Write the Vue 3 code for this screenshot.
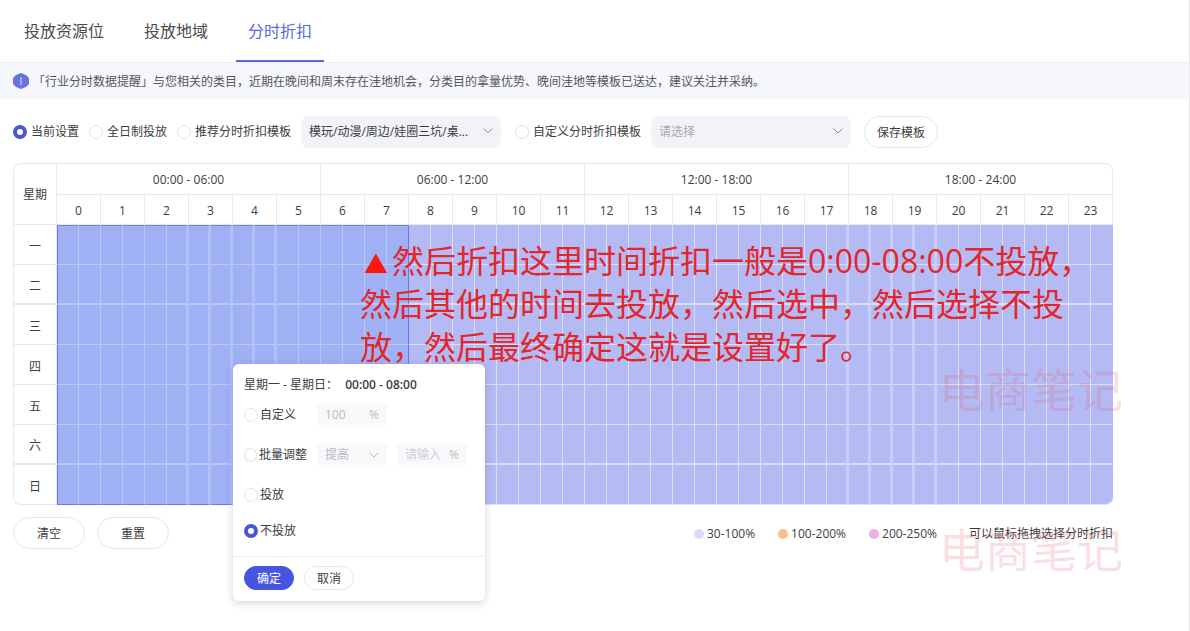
<template>
    <div class="page">
        <nav class="tabs">
            <a
                v-for="tab in tabs"
                :key="tab"
                href="#"
                class="tab"
                :class="{ active: tab === activeTab }"
                @click.prevent="activeTab = tab"
                v-text="tab"
            ></a>
        </nav>
        <div class="notice">
            <svg class="notice-icon" viewBox="0 0 16 16">
                <path d="M8 0l5 2 3 3v6l-3 3-5 2-5-2-3-3V5l3-3z" fill="#6672e4" />
                <path d="M8 4v8" stroke="#b9c0f8" stroke-width="1.5" />
            </svg>
            <p>「行业分时数据提醒」与您相关的类目，近期在晚间和周末存在洼地机会，分类目的拿量优势、晚间洼地等模板已送达，建议关注并采纳。</p>
        </div>
        <main class="content">
            <div class="filters">
                <label class="radio"><input type="radio" value="current" v-model="mode" />当前设置</label>
                <label class="radio"><input type="radio" value="allday" v-model="mode" />全日制投放</label>
                <label class="radio"><input type="radio" value="recommend" v-model="mode" />推荐分时折扣模板</label>
                <div class="select-box">
                    <select aria-label="推荐分时折扣模板">
                        <option>模玩/动漫/周边/娃圈三坑/桌...</option>
                    </select>
                    <svg viewBox="0 0 10 6"><path d="M0.5 0.5L5 5l4.5-4.5" /></svg>
                </div>
                <label class="radio custom"><input type="radio" value="custom" v-model="mode" />自定义分时折扣模板</label>
                <div class="select-box">
                    <select class="placeholder" aria-label="自定义分时折扣模板">
                        <option>请选择</option>
                    </select>
                    <svg viewBox="0 0 10 6"><path d="M0.5 0.5L5 5l4.5-4.5" /></svg>
                </div>
                <button type="button" class="btn save">保存模板</button>
            </div>

            <div class="board">
                <table class="schedule">
                    <colgroup>
                        <col class="week-col" />
                        <col v-for="n in 48" :key="n" />
                    </colgroup>
                    <thead>
                        <tr class="period-row">
                            <th rowspan="2" class="corner">星期</th>
                            <th v-for="p in periods" :key="p" colspan="12" v-text="p"></th>
                        </tr>
                        <tr class="hour-row">
                            <th v-for="h in 24" :key="h" colspan="2">{{ h - 1 }}</th>
                        </tr>
                    </thead>
                    <tbody>
                        <tr v-for="(day, row) in days" :key="day" :class="{ strong: row === 1 || row === 5 }">
                            <th v-text="day"></th>
                            <td v-for="n in 48" :key="n" :class="cellClass(row, n)"></td>
                        </tr>
                    </tbody>
                </table>

                <p class="note">
                    <span class="mark">▲</span>然后折扣这里时间折扣一般是0:00-08:00不投放，<br />
                    然后其他的时间去投放，然后选中，然后选择不投<br />
                    放，然后最终确定这就是设置好了。
                </p>

                <form class="popover" @submit.prevent>
                    <div class="popover-body">
                        <div class="popover-title">星期一 - 星期日： <b>00:00 - 08:00</b></div>
                        <div class="option">
                            <label class="radio"><input type="radio" value="fixed" v-model="action" />自定义</label>
                            <div class="field">
                                <input type="text" value="100" aria-label="自定义折扣" disabled />
                                <span>%</span>
                            </div>
                        </div>
                        <div class="option">
                            <label class="radio"><input type="radio" value="batch" v-model="action" />批量调整</label>
                            <div class="field">
                                <select aria-label="调整方式" disabled>
                                    <option>提高</option>
                                </select>
                                <svg viewBox="0 0 10 6"><path d="M0.5 0.5L5 5l4.5-4.5" /></svg>
                            </div>
                            <div class="field">
                                <input type="text" placeholder="请输入" aria-label="调整比例" disabled />
                                <span>%</span>
                            </div>
                        </div>
                        <div class="option">
                            <label class="radio"><input type="radio" value="on" v-model="action" />投放</label>
                        </div>
                        <div class="option last">
                            <label class="radio"><input type="radio" value="off" v-model="action" />不投放</label>
                        </div>
                    </div>
                    <div class="popover-footer">
                        <button type="submit" class="btn small primary">确定</button>
                        <button type="button" class="btn small">取消</button>
                    </div>
                </form>
                <div class="watermark">电商笔记</div>
            </div>

            <div class="bottom">
                <button type="button" class="btn">清空</button>
                <button type="button" class="btn">重置</button>
                <ul class="legend">
                    <li v-for="item in legend" :key="item.text">
                        <i :class="item.color"></i>{{ item.text }}
                    </li>
                </ul>
                <span class="tip">可以鼠标拖拽选择分时折扣</span>
                <div class="watermark">电商笔记</div>
            </div>
        </main>
    </div>
</template>
<script setup>
import { ref } from "vue";

const tabs = ["投放资源位", "投放地域", "分时折扣"];
const activeTab = ref("分时折扣");
const mode = ref("current");
const action = ref("off");

const periods = ["00:00 - 06:00", "06:00 - 12:00", "12:00 - 18:00", "18:00 - 24:00"];
const days = ["一", "二", "三", "四", "五", "六", "日"];
const legend = [
    { text: "30-100%", color: "purple" },
    { text: "100-200%", color: "orange" },
    { text: "200-250%", color: "pink" },
];

/* 每格半小时，选中 00:00 - 08:00 */
const selectedEnd = 16;
function cellClass(row, n) {
    const selected = n <= selectedEnd;
    return {
        selected,
        wide: (n >= 6 && n <= 10) || (n >= 36 && n <= 40),
        "edge-top": selected && row === 0,
        "edge-bottom": selected && row === days.length - 1,
        "edge-left": n === 1,
        "edge-right": n === selectedEnd,
    };
}
</script>
<style>
body {
    margin: 0;
    background: #fff;
}
</style>
<style scoped>
.page {
    min-height: 100vh;
    box-sizing: border-box;
    border-right: 1px solid #e8e9ee;
    font-family: "Open Sans", "Noto Sans CJK SC", sans-serif;
    font-size: 12px;
    line-height: 20px;
    color: #3c3d42;
    overflow: hidden;
}
.page p {
    margin: 0;
}
.page input,
.page select,
.page button {
    font: inherit;
    color: inherit;
    margin: 0;
}
.tabs {
    display: flex;
    gap: 16px;
    padding: 0 12px;
    border-bottom: 1px solid #eceef5;
}
.tab {
    padding: 20px 12px 18px;
    border-bottom: 2px solid transparent;
    font-size: 16px;
    line-height: 22px;
    color: #4a4b50;
    text-decoration: none;
}
.tab.active {
    color: #5c68dc;
    border-color: #5c68dc;
}
.notice {
    display: flex;
    align-items: center;
    gap: 4px;
    padding: 7px 13px;
    background: #f6f7fd;
    color: #55565c;
}
.notice p {
    padding-top: 2px;
}
.notice-icon {
    width: 16px;
    height: 16px;
    flex: none;
}
.content {
    padding: 17px 76px 0 13px;
}
.filters {
    display: flex;
    align-items: center;
    gap: 10px;
    margin-bottom: 15px;
}
.radio {
    display: flex;
    align-items: center;
    gap: 4px;
    white-space: nowrap;
}
.radio.custom {
    margin-left: 4px;
}
.radio input {
    appearance: none;
    box-sizing: border-box;
    width: 14px;
    height: 14px;
    border: 1px solid #e2e4ea;
    border-radius: 50%;
    background: #fff;
}
.radio input:checked {
    border: 4px solid #4a56d8;
}
.select-box {
    position: relative;
    width: 200px;
}
.page .select-box select {
    appearance: none;
    width: 100%;
    height: 32px;
    padding: 0 24px 0 8px;
    border: none;
    border-radius: 8px;
    background: #f1f3f6;
}
.page .select-box select.placeholder {
    color: #a6a8ae;
}
.select-box svg,
.field svg {
    position: absolute;
    right: 8px;
    top: 12px;
    width: 10px;
    height: 6px;
    fill: none;
    stroke: #8b8d94;
    pointer-events: none;
}
.btn {
    box-sizing: border-box;
    width: 72px;
    height: 32px;
    padding: 2px 0 0;
    border: 1px solid #e6e8ec;
    border-radius: 16px;
    background: #fff;
}
.btn.save {
    width: 74px;
    margin-left: 3px;
}
.board {
    position: relative;
}
.schedule {
    width: 100%;
    table-layout: fixed;
    border-collapse: separate;
    border-spacing: 0;
}
.week-col {
    width: 44px;
}
.schedule th,
.schedule td {
    box-sizing: border-box;
    padding: 0;
    border: 0 solid #e6e9ef;
    border-width: 0 1px 1px 0;
    font-weight: normal;
    text-align: center;
}
.schedule th {
    padding-top: 2px;
}
.schedule .period-row th {
    height: 32px;
    border-top-width: 1px;
}
.schedule .hour-row th {
    height: 30px;
}
.schedule .corner {
    border-left-width: 1px;
    border-radius: 8px 0 0 0;
}
.schedule .period-row th:last-child {
    border-radius: 0 8px 0 0;
}
.schedule tbody th {
    height: 40px;
    padding-top: 4px;
    border-left-width: 1px;
}
.schedule tbody tr:last-child th {
    border-radius: 0 0 0 8px;
}
.schedule td {
    background: #b4baf3;
    border-color: #dadefb;
}
.schedule td:last-child {
    border-right-color: #b4baf3;
}
.schedule tr:last-child td:last-child {
    border-radius: 0 0 8px 0;
}
.schedule td.selected {
    background: #9fb0f4;
    border-color: #b9c8fa;
}
.schedule td.wide {
    border-right: 3px solid #c8cdf9;
}
.schedule td.selected.wide {
    border-right-color: #afbff8;
}
.schedule .strong th,
.schedule .strong td {
    border-bottom-width: 2px;
}
.schedule td.edge-top {
    border-top: 1px solid #7380e0;
}
.schedule td.edge-bottom {
    border-bottom-color: #6b7ae2;
}
.schedule td.edge-left {
    border-left: 1px solid #6b7ae2;
}
.schedule td.edge-right {
    border-right-color: #6b7ae2;
}
.note {
    position: absolute;
    left: 347px;
    top: 76px;
    font-size: 32px;
    line-height: 43px;
    color: #e3262b;
    white-space: nowrap;
}
.note .mark {
    display: inline-block;
    width: 32px;
    font-size: 24px;
    line-height: 24px;
    text-align: center;
    color: #fb1a12;
}
.popover {
    position: absolute;
    left: 20%;
    top: 201px;
    width: 252px;
    border-radius: 6px;
    background: #fff;
    box-shadow: 0 2px 8px rgba(40, 45, 80, 0.2);
}
.popover-body {
    padding: 11px 11px 9px;
    border-bottom: 1px solid #eceef1;
}
.popover-title b {
    margin-left: 4px;
    font-weight: 600;
}
.option {
    display: flex;
    align-items: center;
    gap: 10px;
    height: 40px;
}
.option.last {
    height: 32px;
}
.option .radio {
    width: 63px;
    gap: 2px;
}
.field {
    position: relative;
    display: flex;
    align-items: center;
    box-sizing: border-box;
    width: 70px;
    height: 24px;
    padding: 0 8px;
    border-radius: 4px;
    background: #f8f9fb;
    color: #b9bbc2;
}
.field input,
.field select {
    appearance: none;
    flex: 1;
    min-width: 0;
    padding: 0;
    border: none;
    background: none;
    opacity: 1;
}
.field input::placeholder {
    color: #ced0d6;
}
.field svg {
    top: 9px;
    stroke: #b9bbc2;
}
.popover-footer {
    display: flex;
    gap: 10px;
    padding: 9px 11px 11px;
}
.btn.small {
    width: 50px;
    height: 24px;
    border-radius: 12px;
    line-height: 20px;
}
.page .btn.primary {
    border-color: #4655e0;
    background: #4655e0;
    color: #fff;
}
.bottom {
    position: relative;
    display: flex;
    align-items: center;
    gap: 12px;
    margin-top: 12px;
}
.legend {
    display: flex;
    gap: 23px;
    margin: 0 20px 0 auto;
    padding: 2px 0 0;
    list-style: none;
}
.tip {
    padding-top: 2px;
}
.legend li {
    display: flex;
    align-items: center;
    gap: 3px;
}
.legend i {
    width: 10px;
    height: 10px;
    border-radius: 50%;
}
.legend .purple {
    background: #dad8fb;
}
.legend .orange {
    background: #f8c08c;
}
.legend .pink {
    background: #efaee4;
}
.watermark {
    position: absolute;
    right: -10px;
    bottom: 86px;
    font-size: 46px;
    line-height: 60px;
    color: rgba(235, 80, 100, 0.2);
    white-space: nowrap;
    pointer-events: none;
}
.bottom .watermark {
    bottom: -30px;
}
</style>
